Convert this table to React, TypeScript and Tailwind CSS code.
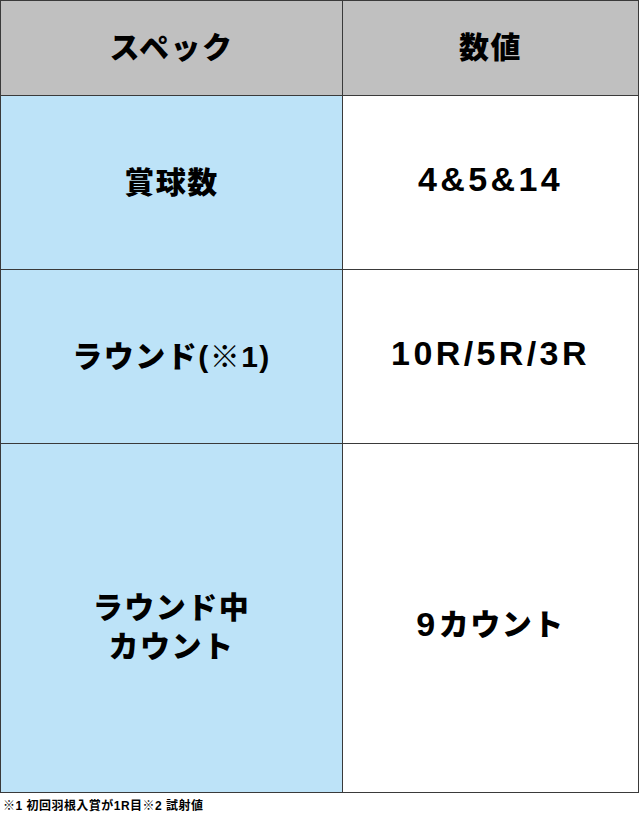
const font = { fontFamily: '"Liberation Sans", "Noto Sans CJK JP", sans-serif' };

const rows = [
  { label: ["賞球数"], value: "4&5&14", kana: "", h: "h-[174px]", pad: "" },
  { label: ["ラウンド(※1)"], value: "10R/5R/3R", kana: "", h: "h-[174px]", pad: "" },
  { label: ["ラウンド中", "カウント"], value: "9", kana: "カウント", h: "h-[349px]", pad: "pt-[18px]" },
];

export default function App() {
  return (
    <div className="w-[640px] bg-white text-black" style={font}>
      <div className="grid w-[639px] grid-cols-[342px_296px] border-l border-t border-[#3a3a3a]">
        <div className="flex h-[95px] items-center justify-center border-b border-r border-[#3a3a3a] bg-[#c0c0c0] pb-[2px] text-[30px] font-black tracking-[0.05em]">
          スペック
        </div>
        <div className="flex h-[95px] items-center justify-center border-b border-r border-[#3a3a3a] bg-[#c0c0c0] pb-[2px] text-[30px] font-black tracking-[0.05em]">
          数値
        </div>
        {rows.map((r) => (
          <>
            <div
              key={r.value + "l"}
              className={`flex ${r.h} ${r.pad} flex-col items-center justify-center border-b border-r border-[#3a3a3a] bg-[#bde3f8] text-[30px] font-black leading-[39px] tracking-[0.05em]`}
            >
              {r.label.map((t) => (
                <span key={t}>{t}</span>
              ))}
            </div>
            <div
              key={r.value + "r"}
              className={`flex ${r.h} ${r.pad} items-center justify-center border-b border-r border-[#3a3a3a] bg-white pb-[6px] text-[34px] font-bold tracking-[0.1em]`}
            >
              <span>{r.value}</span>
              {r.kana && <span className="text-[30px] font-black tracking-[0.05em]">{r.kana}</span>}
            </div>
          </>
        ))}
      </div>
      <p className="px-[3px] pt-[6px] text-[12px] font-bold leading-[14px] tracking-[0.04em]">※1 初回羽根入賞が1R目※2 試射値</p>
    </div>
  );
}
